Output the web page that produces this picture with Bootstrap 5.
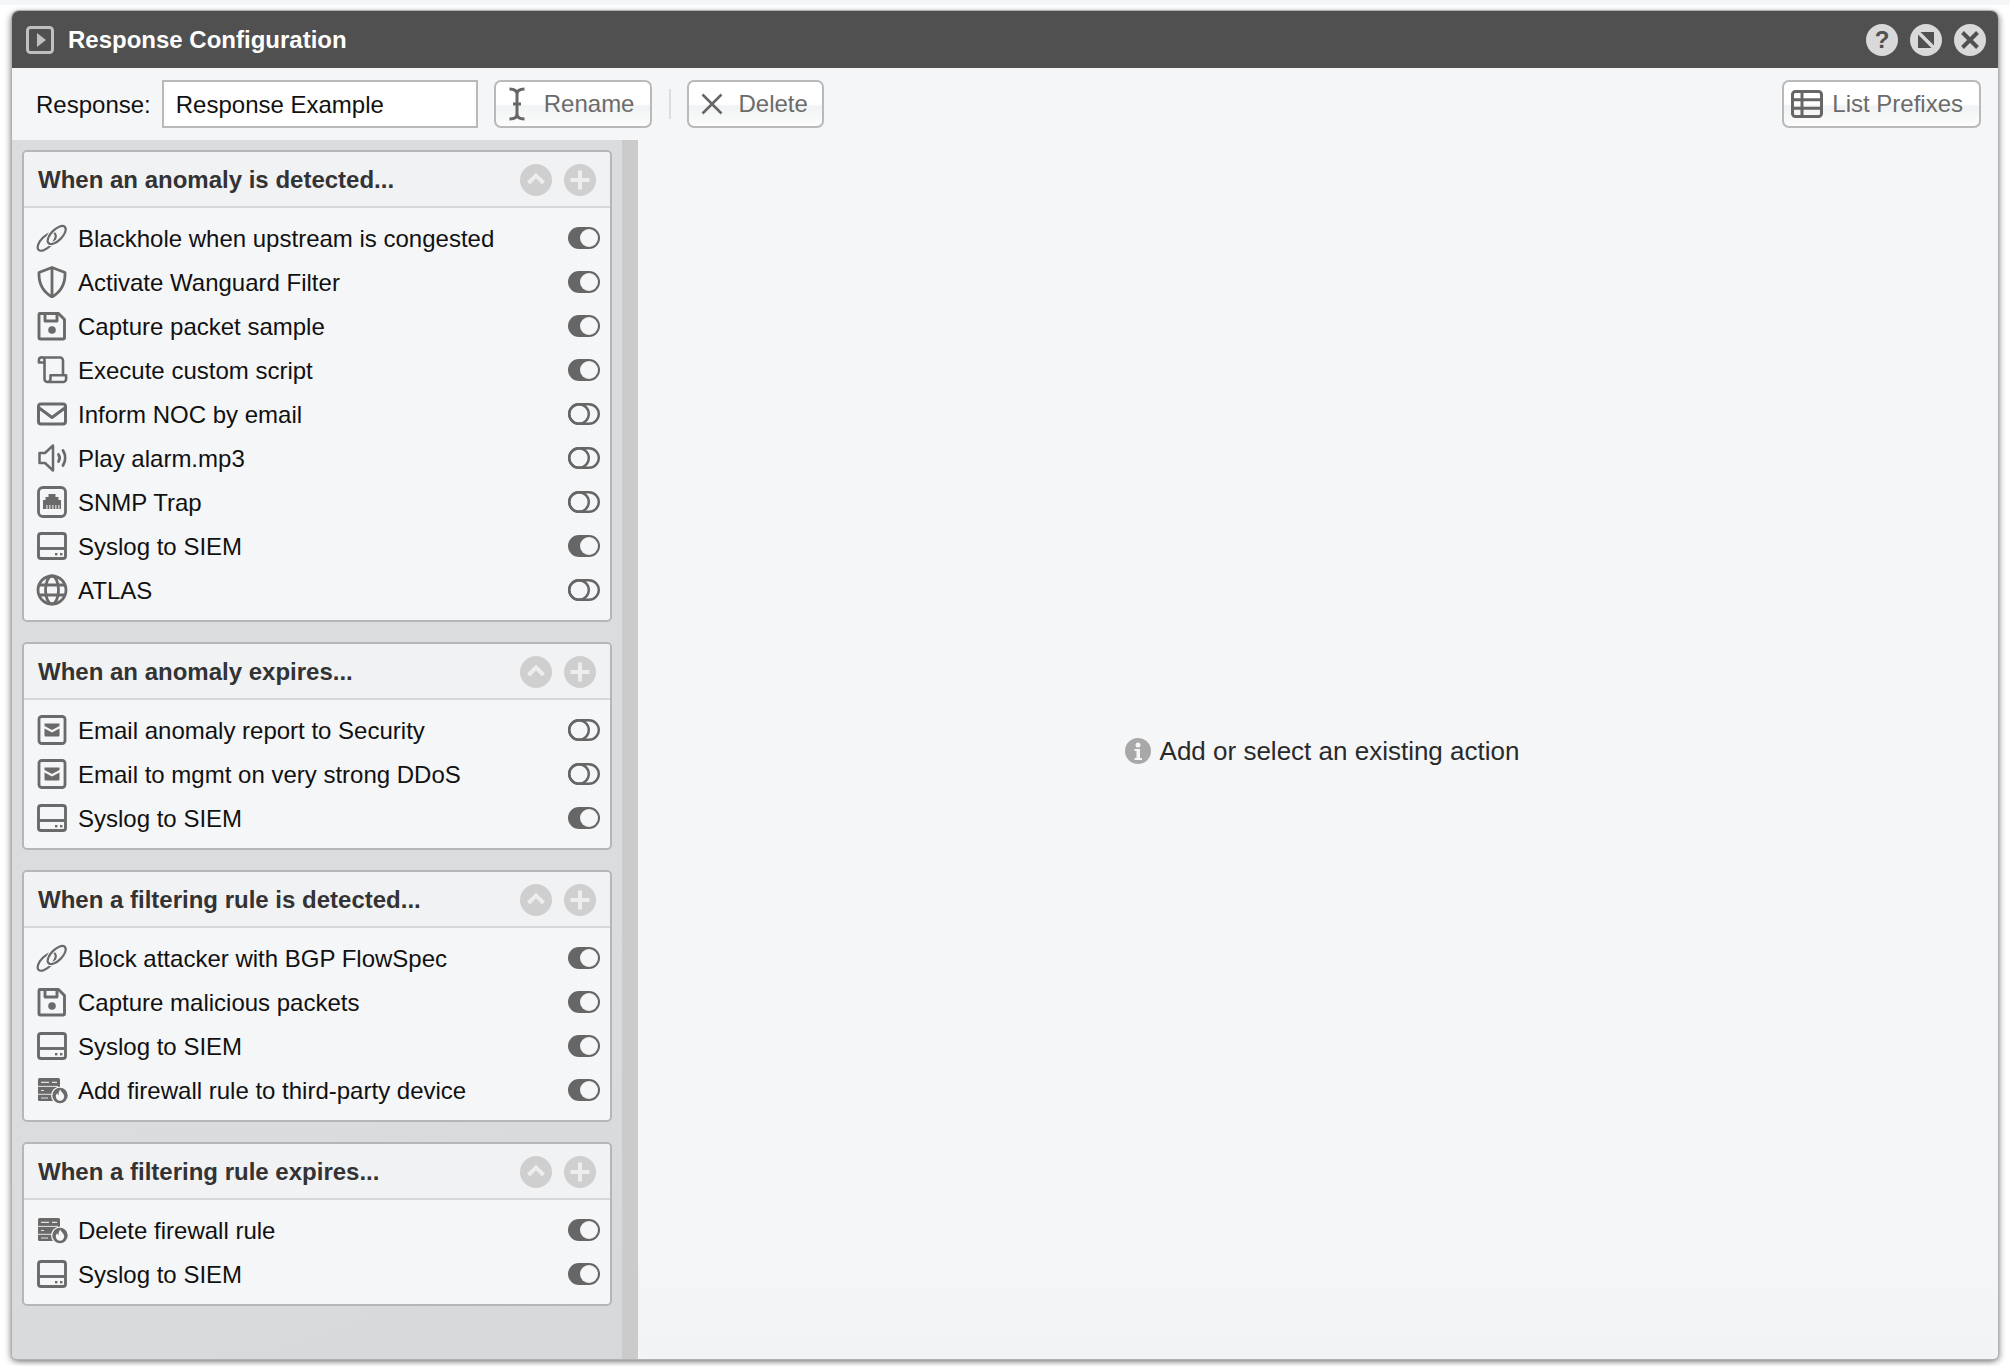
<!DOCTYPE html>
<html lang="en">
<head>
<meta charset="utf-8">
<title>Response Configuration</title>
<link href="https://cdn.jsdelivr.net/npm/bootstrap@5.3.0/dist/css/bootstrap.min.css" rel="stylesheet">
<style>
html,body{height:100%;}
body{background:#fff;border-top:5px solid #f5f6f8;font-family:"Liberation Sans",Arial,sans-serif;color:#222;overflow:hidden;}
.win{height:1348px;margin:6px 12px 0 12px;border-radius:7px 7px 5px 5px;box-shadow:0 0 0 1px #b0b0b0,-2px 2px 6px rgba(0,0,0,.35),2px 2px 6px rgba(0,0,0,.35);background:#f5f6f8;overflow:hidden;}
.win-title{height:57px;background:#505050;color:#fff;padding:0 12px 0 14px;flex:none;}
.win-title h1{font-size:24px;font-weight:700;margin:2px 0 0 14px;}
.round{width:32px;height:32px;flex:none;display:block;}
.win-tools{height:72px;flex:none;background:#f5f6f8;padding:0 17px 0 24px;font-size:24px;}
.win-label{color:#111;margin-right:11px;padding-top:2px;}
.name-box{width:316px;height:48px;border:2px solid #b8b9bb;border-radius:0;font-size:24px;padding:2px 12px 0;color:#111;background:#fff;box-shadow:none;}
.tool-btn{height:48px;border:2px solid #b8b9bb;border-radius:7px;background:linear-gradient(#fff 0,#fff 50%,#f1f2f3 55%,#fcfcfc 100%);color:#6b6b6b;font-size:24px;display:flex;align-items:center;line-height:1;}
.btn-rename{padding:0 16px 0 12px;margin-left:16px;}
.btn-rename svg{margin-right:18px;}
.btn-delete{padding:0 14px 0 11px;}
.btn-delete svg{margin-right:14px;}
.btn-prefix{padding:0 16px 0 7px;margin-left:auto;}
.btn-prefix svg{margin-right:9px;}
.tool-sep{width:2px;height:30px;background:#dcddde;margin:0 16px 0 17px;}
.win-main{min-height:0;}
.side{width:626px;flex:none;background:linear-gradient(160deg,#dbdcde 70%,#d7d8da 100%);}
.side-in{width:610px;padding:10px;}
.side-bar{width:16px;background:#cbcbcb;}
.pane{background:linear-gradient(#f5f6f8 90%,#f2f3f5 100%);border-bottom-left-radius:10px;padding:2px 0 0 8px;}
.msg{font-size:26px;color:#2a2a2a;line-height:1;}
.msg svg{margin-right:9px;}
.act-card{border:2px solid #b5b6b8;border-radius:5px;background:#f5f6f8;margin-bottom:20px;color:#111;}
.act-card:last-child{margin-bottom:0;}
.act-head{height:56px;background:#f1f2f4;border-bottom:2px solid #d6d7d9;padding:2px 14px 0 14px;border-radius:3px 3px 0 0;}
.act-head h2{font-size:24px;font-weight:700;color:#333;margin:0;padding-top:1px;}
.act-head .round + .round{margin-left:12px;}
.act-list{padding:8px 10px 8px 12px;}
.act-row{height:44px;font-size:24px;}
.act-row span{padding-top:1px;}
.act-row .ico{width:32px;height:32px;flex:none;margin-right:10px;color:#6a6a6a;}
.tog{width:32px;height:22px;flex:none;}
</style>
</head>
<body>
<svg width="0" height="0" class="d-none">
<defs>
<clipPath id="link-half"><path d="M-5 30.200 35 3.400V-5H-5Z"/></clipPath>
<symbol id="i-link" viewBox="0 0 32 32"><g fill="none" stroke-width="2.200">
<ellipse cx="20.700" cy="13" rx="11.500" ry="5.500" transform="rotate(-45 20.700 13)" stroke="currentColor"/>
<ellipse cx="10.700" cy="19.700" rx="11.500" ry="5.500" transform="rotate(-45 10.700 19.700)" stroke="#f5f6f8" stroke-width="4.400"/>
<ellipse cx="10.700" cy="19.700" rx="11.500" ry="5.500" transform="rotate(-45 10.700 19.700)" stroke="currentColor"/>
<g clip-path="url(#link-half)">
<ellipse cx="20.700" cy="13" rx="11.500" ry="5.500" transform="rotate(-45 20.700 13)" stroke="#f5f6f8" stroke-width="4.400"/>
<ellipse cx="20.700" cy="13" rx="11.500" ry="5.500" transform="rotate(-45 20.700 13)" stroke="currentColor"/>
</g></g></symbol>
<symbol id="i-shield" viewBox="0 0 32 32"><path d="M16 1.500 29 6.500c.4 10-3.500 19-13 24.500C6.500 25.500 2.600 16.500 3 6.500ZM16 2v28" fill="none" stroke="currentColor" stroke-width="2.800" stroke-linejoin="round"/></symbol>
<symbol id="i-save" viewBox="0 0 32 32"><g fill="none" stroke="currentColor" stroke-width="2.900" stroke-linejoin="round"><path d="M4 3.500h18.500l6 6V28a1 1 0 0 1-1 1H4a1 1 0 0 1-1-1V4.500a1 1 0 0 1 1-1Z"/><path d="M9 4v7h12V4"/></g><circle cx="16" cy="20" r="3.800" fill="currentColor"/></symbol>
<symbol id="i-script" viewBox="0 0 32 32"><g fill="none" stroke="currentColor" stroke-width="2.600" stroke-linejoin="round" stroke-linecap="round"><path d="M8.500 9V6a2.800 2.800 0 0 0-5.600 0v2.500h5.600M5.500 3.500h18.500a3 3 0 0 1 3 3V21M8.500 6v19a3 3 0 0 0 6 0v-3.800h15.600V25a3 3 0 0 1-3 3H11.500"/></g></symbol>
<symbol id="i-mail" viewBox="0 0 32 32"><g fill="none" stroke="currentColor" stroke-width="3" stroke-linejoin="round"><rect x="2.500" y="6" width="27" height="20" rx="2.500"/><path d="M2.500 9.500 16 19.500 29.500 9.500"/></g></symbol>
<symbol id="i-sound" viewBox="0 0 32 32"><g fill="none" stroke="currentColor" stroke-width="2.500" stroke-linejoin="round" stroke-linecap="round"><path d="M3.500 11h5.500l8-7.500v25L9 21H3.500Z"/><path d="M22.500 12.500c1.300 2 1.300 5 0 7M27 8.500c2.800 4.500 2.800 10.500 0 15" stroke-width="2.800"/></g></symbol>
<symbol id="i-port" viewBox="0 0 32 32"><rect x="2.500" y="1.500" width="27" height="29" rx="4.500" fill="none" stroke="currentColor" stroke-width="2.800"/><path d="M12.500 8h7v3h3v3h2.500v9h-1.600v-4h-1v4h-2v-4h-1v4h-2v-4h-1v4h-2v-4h-1v4h-2v-4h-1v4H7v-9h2.500v-3h3Z" fill="currentColor"/></symbol>
<symbol id="i-hdd" viewBox="0 0 32 32"><g fill="none" stroke="currentColor" stroke-width="2.900"><rect x="2.500" y="3.500" width="27" height="25" rx="2.500"/><path d="M2.500 18.500h27"/></g><rect x="19" y="23" width="2.400" height="2.400" fill="currentColor"/><rect x="24" y="23" width="2.400" height="2.400" fill="currentColor"/></symbol>
<symbol id="i-globe" viewBox="0 0 32 32"><g fill="none" stroke="currentColor" stroke-width="2.800"><circle cx="16" cy="16" r="14"/><ellipse cx="16" cy="16" rx="6.500" ry="14"/><path d="M3 11h26M3 21h26"/></g></symbol>
<symbol id="i-msgbox" viewBox="0 0 32 32"><rect x="3" y="2.500" width="26" height="27" rx="2.800" fill="none" stroke="currentColor" stroke-width="2.800"/><path d="M8.500 9.500h15v2.600L16 16 8.500 12.100ZM8.500 14.600 16 18.500l7.500-3.900v7a.9.9 0 0 1-.9.9H9.400a.9.9 0 0 1-.9-.9Z" fill="currentColor"/></symbol>
<symbol id="i-wall" viewBox="0 0 32 32"><rect x="2" y="4" width="22" height="23" rx="1.500" fill="currentColor"/><path d="M5 8.300h8M16 8.300h5M5 16.500h3M5 24h7" stroke="#e2e3e5" stroke-width="1.200" fill="none"/><path d="M2 12.400h20M2 20.300h14" stroke="#f5f6f8" stroke-width=".9" fill="none"/><circle cx="24" cy="21.500" r="9" fill="#f5f6f8"/><circle cx="24" cy="21.500" r="7.700" fill="currentColor"/><path d="M24.300 15.500c.6 2.600 3.900 3.800 3.900 7a4.200 4.200 0 0 1-8.400 0c0-1.400.6-2.600 1.600-3.300.2 1 .5 1.600 1.200 2-.2-2.200.3-4.200 1.700-5.700Z" fill="#f5f6f8"/></symbol>
<symbol id="t-on" viewBox="0 0 32 22"><rect width="32" height="22" rx="11" fill="#666"/><circle cx="21" cy="11" r="9" fill="#f5f6f8"/></symbol>
<symbol id="t-off" viewBox="0 0 32 22"><rect x="1.200" y="1.200" width="29.600" height="19.600" rx="9.800" fill="none" stroke="#666" stroke-width="2.400"/><circle cx="11" cy="11" r="9.800" fill="none" stroke="#666" stroke-width="2.400"/></symbol>
<symbol id="b-up" viewBox="0 0 32 32"><circle cx="16" cy="16" r="16" fill="#cfcfcf"/><path d="M8.500 19 16 11.500 23.500 19" fill="none" stroke="#eceded" stroke-width="4"/></symbol>
<symbol id="b-add" viewBox="0 0 32 32"><circle cx="16" cy="16" r="16" fill="#cfcfcf"/><path d="M16 6.500v19M6.500 16h19" fill="none" stroke="#eceded" stroke-width="4"/></symbol>
</defs>
</svg>

<div class="win d-flex flex-column">
  <div class="win-title d-flex align-items-center">
    <svg width="28" height="28" viewBox="0 0 28 28"><rect x="1.500" y="1.500" width="25" height="25" rx="3" fill="none" stroke="#c0c0c0" stroke-width="3"/><path d="M11 7 20 14 11 21Z" fill="#c0c0c0"/></svg>
    <h1>Response Configuration</h1>
    <div class="d-flex ms-auto gap-2 win-ctl">
      <svg class="round me-1" viewBox="0 0 32 32"><circle cx="16" cy="16" r="16" fill="#d9d9d9"/><text x="16" y="24" text-anchor="middle" font-family="Liberation Sans" font-weight="700" font-size="24" fill="#505050">?</text></svg>
      <svg class="round me-1" viewBox="0 0 32 32"><circle cx="16" cy="16" r="16" fill="#d9d9d9"/><rect x="8" y="8" width="16" height="16" fill="#505050"/><path d="M6 6 26 26" stroke="#d9d9d9" stroke-width="3.500"/></svg>
      <svg class="round" viewBox="0 0 32 32"><circle cx="16" cy="16" r="16" fill="#d9d9d9"/><path d="M8.500 8.500 23.500 23.500M23.500 8.500 8.500 23.500" stroke="#505050" stroke-width="4"/></svg>
    </div>
  </div>

  <div class="win-tools d-flex align-items-center">
    <span class="win-label">Response:</span>
    <input class="form-control name-box" type="text" value="Response Example">
    <button class="btn tool-btn btn-rename" type="button">
      <svg width="18" height="34" viewBox="0 0 18 34"><path d="M1.500 2c4.500 0 7.500 1.500 7.500 5v20c0 3.500-3 5-7.500 5M16.500 2C12 2 9 3.500 9 7v20c0 3.500 3 5 7.500 5M5 17h8" fill="none" stroke="#666" stroke-width="3"/></svg>Rename
    </button>
    <span class="tool-sep"></span>
    <button class="btn tool-btn btn-delete" type="button">
      <svg width="24" height="24" viewBox="0 0 24 24"><path d="M2.500 2.500 21.500 21.500M21.500 2.500 2.500 21.500" stroke="#666" stroke-width="2.500"/></svg>Delete
    </button>
    <button class="btn tool-btn btn-prefix" type="button">
      <svg width="32" height="28" viewBox="0 0 32 28"><g fill="none" stroke="#666" stroke-width="3"><rect x="1.500" y="1.500" width="29" height="25" rx="3"/><path d="M1.500 9.800h29M1.500 18.200h29M11 1.500v25"/></g></svg>List Prefixes
    </button>
  </div>

  <div class="win-main d-flex flex-grow-1">
    <div class="side d-flex">
      <div class="side-in">
        <div class="card act-card">
          <div class="act-head d-flex align-items-center"><h2 class="flex-grow-1">When an anomaly is detected...</h2><svg class="round"><use href="#b-up"/></svg><svg class="round"><use href="#b-add"/></svg></div>
          <div class="act-list">
            <div class="act-row d-flex align-items-center"><svg class="ico"><use href="#i-link"/></svg><span class="flex-grow-1">Blackhole when upstream is congested</span><svg class="tog"><use href="#t-on"/></svg></div>
            <div class="act-row d-flex align-items-center"><svg class="ico"><use href="#i-shield"/></svg><span class="flex-grow-1">Activate Wanguard Filter</span><svg class="tog"><use href="#t-on"/></svg></div>
            <div class="act-row d-flex align-items-center"><svg class="ico"><use href="#i-save"/></svg><span class="flex-grow-1">Capture packet sample</span><svg class="tog"><use href="#t-on"/></svg></div>
            <div class="act-row d-flex align-items-center"><svg class="ico"><use href="#i-script"/></svg><span class="flex-grow-1">Execute custom script</span><svg class="tog"><use href="#t-on"/></svg></div>
            <div class="act-row d-flex align-items-center"><svg class="ico"><use href="#i-mail"/></svg><span class="flex-grow-1">Inform NOC by email</span><svg class="tog"><use href="#t-off"/></svg></div>
            <div class="act-row d-flex align-items-center"><svg class="ico"><use href="#i-sound"/></svg><span class="flex-grow-1">Play alarm.mp3</span><svg class="tog"><use href="#t-off"/></svg></div>
            <div class="act-row d-flex align-items-center"><svg class="ico"><use href="#i-port"/></svg><span class="flex-grow-1">SNMP Trap</span><svg class="tog"><use href="#t-off"/></svg></div>
            <div class="act-row d-flex align-items-center"><svg class="ico"><use href="#i-hdd"/></svg><span class="flex-grow-1">Syslog to SIEM</span><svg class="tog"><use href="#t-on"/></svg></div>
            <div class="act-row d-flex align-items-center"><svg class="ico"><use href="#i-globe"/></svg><span class="flex-grow-1">ATLAS</span><svg class="tog"><use href="#t-off"/></svg></div>
          </div>
        </div>
        <div class="card act-card">
          <div class="act-head d-flex align-items-center"><h2 class="flex-grow-1">When an anomaly expires...</h2><svg class="round"><use href="#b-up"/></svg><svg class="round"><use href="#b-add"/></svg></div>
          <div class="act-list">
            <div class="act-row d-flex align-items-center"><svg class="ico"><use href="#i-msgbox"/></svg><span class="flex-grow-1">Email anomaly report to Security</span><svg class="tog"><use href="#t-off"/></svg></div>
            <div class="act-row d-flex align-items-center"><svg class="ico"><use href="#i-msgbox"/></svg><span class="flex-grow-1">Email to mgmt on very strong DDoS</span><svg class="tog"><use href="#t-off"/></svg></div>
            <div class="act-row d-flex align-items-center"><svg class="ico"><use href="#i-hdd"/></svg><span class="flex-grow-1">Syslog to SIEM</span><svg class="tog"><use href="#t-on"/></svg></div>
          </div>
        </div>
        <div class="card act-card">
          <div class="act-head d-flex align-items-center"><h2 class="flex-grow-1">When a filtering rule is detected...</h2><svg class="round"><use href="#b-up"/></svg><svg class="round"><use href="#b-add"/></svg></div>
          <div class="act-list">
            <div class="act-row d-flex align-items-center"><svg class="ico"><use href="#i-link"/></svg><span class="flex-grow-1">Block attacker with BGP FlowSpec</span><svg class="tog"><use href="#t-on"/></svg></div>
            <div class="act-row d-flex align-items-center"><svg class="ico"><use href="#i-save"/></svg><span class="flex-grow-1">Capture malicious packets</span><svg class="tog"><use href="#t-on"/></svg></div>
            <div class="act-row d-flex align-items-center"><svg class="ico"><use href="#i-hdd"/></svg><span class="flex-grow-1">Syslog to SIEM</span><svg class="tog"><use href="#t-on"/></svg></div>
            <div class="act-row d-flex align-items-center"><svg class="ico"><use href="#i-wall"/></svg><span class="flex-grow-1">Add firewall rule to third-party device</span><svg class="tog"><use href="#t-on"/></svg></div>
          </div>
        </div>
        <div class="card act-card">
          <div class="act-head d-flex align-items-center"><h2 class="flex-grow-1">When a filtering rule expires...</h2><svg class="round"><use href="#b-up"/></svg><svg class="round"><use href="#b-add"/></svg></div>
          <div class="act-list">
            <div class="act-row d-flex align-items-center"><svg class="ico"><use href="#i-wall"/></svg><span class="flex-grow-1">Delete firewall rule</span><svg class="tog"><use href="#t-on"/></svg></div>
            <div class="act-row d-flex align-items-center"><svg class="ico"><use href="#i-hdd"/></svg><span class="flex-grow-1">Syslog to SIEM</span><svg class="tog"><use href="#t-on"/></svg></div>
          </div>
        </div>
      </div>
      <div class="side-bar"></div>
    </div>
    <div class="pane flex-grow-1 d-flex align-items-center justify-content-center">
      <div class="msg d-flex align-items-center">
        <svg width="26" height="26" viewBox="0 0 26 26"><circle cx="13" cy="13" r="13" fill="#a8a8a8"/><circle cx="13" cy="7" r="2.500" fill="#f5f6f8"/><path d="M9.500 11h5.500v9h2v2H9.500v-2h2v-7h-2Z" fill="#f5f6f8"/></svg>
        Add or select an existing action
      </div>
    </div>
  </div>
</div>
</body>
</html>
